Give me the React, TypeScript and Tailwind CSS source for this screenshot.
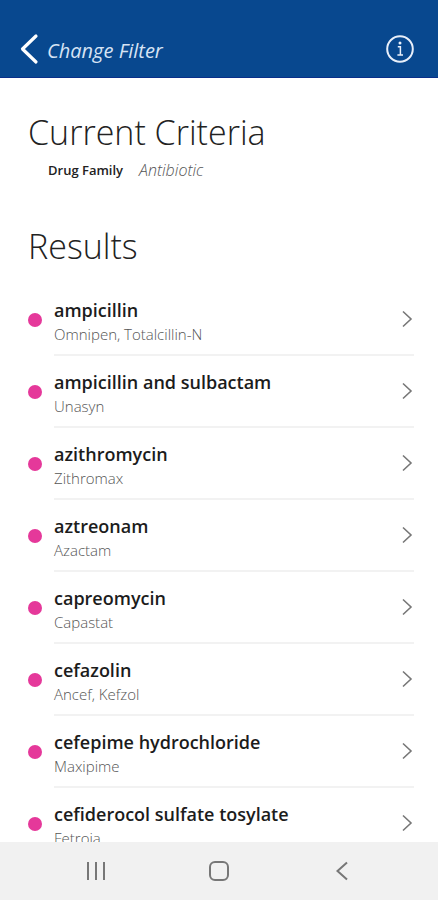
import React from 'react';

interface Drug {
  name: string;
  brands: string;
}

const RESULTS: Drug[] = [
  { name: 'ampicillin', brands: 'Omnipen, Totalcillin-N' },
  { name: 'ampicillin and sulbactam', brands: 'Unasyn' },
  { name: 'azithromycin', brands: 'Zithromax' },
  { name: 'aztreonam', brands: 'Azactam' },
  { name: 'capreomycin', brands: 'Capastat' },
  { name: 'cefazolin', brands: 'Ancef, Kefzol' },
  { name: 'cefepime hydrochloride', brands: 'Maxipime' },
  { name: 'cefiderocol sulfate tosylate', brands: 'Fetroja' },
];

const Header: React.FC = () => (
  <header className="flex h-[78px] shrink-0 items-end justify-between border-b border-[#0a2f8a] bg-[#08488f] px-5 pb-2 text-white">
    <button type="button" className="flex h-10 items-center gap-2">
      <svg width="19" height="32" viewBox="0 0 19 32" fill="none" stroke="currentColor" strokeWidth="3.200" strokeLinecap="round" strokeLinejoin="round" aria-hidden="true">
        <path d="M16 3 2.500 16 16 29" />
      </svg>
      <span className="pt-1 text-xl leading-6 italic text-[#d6e3f4]">Change Filter</span>
    </button>
    <button type="button" aria-label="Information" className="flex h-10 w-9 items-center justify-center">
      <svg width="30" height="30" viewBox="0 0 30 30" fill="none" stroke="#e8effa" aria-hidden="true">
        <circle cx="15" cy="15" r="12.800" strokeWidth="2" />
        <circle cx="15" cy="9" r="1.500" fill="#e8effa" stroke="none" />
        <path d="M12.800 12.800h2.600v8M12.400 21h5.600" strokeWidth="1.500" />
      </svg>
    </button>
  </header>
);

const ResultRow: React.FC<{ drug: Drug }> = ({ drug }) => (
  <li>
    <a href="#" className="flex h-[72px] items-center pl-7">
      <span className="h-[14px] w-[14px] shrink-0 rounded-full bg-[#e5389a]" />
      <span className="ml-3 mr-6 flex h-full flex-1 items-center justify-between border-b-2 border-[#f2f2f2]">
        <span className="flex flex-col pt-1.5">
          <span className="text-lg leading-6 font-semibold text-[#1c1c1c]">{drug.name}</span>
          <span className="text-[15px] leading-6 font-light text-[#555]">{drug.brands}</span>
        </span>
        <svg width="13" height="18" viewBox="0 0 13 18" fill="none" stroke="#777" strokeWidth="1.600" aria-hidden="true">
          <path d="M2 1.500 10 9 2 16.500" />
        </svg>
      </span>
    </a>
  </li>
);

const SystemNav: React.FC = () => (
  <nav className="grid h-[58px] shrink-0 grid-cols-[1fr_54px_1fr] items-center bg-[#f1f1f1] text-[#777]">
    <button type="button" aria-label="Recent apps" className="flex h-full items-center justify-center">
      <svg width="20" height="20" viewBox="0 0 20 20" stroke="currentColor" strokeWidth="2" aria-hidden="true">
        <path d="M2 1v18M10 1v18M18 1v18" />
      </svg>
    </button>
    <button type="button" aria-label="Home" className="flex h-full items-center justify-center">
      <svg width="22" height="22" viewBox="0 0 22 22" fill="none" stroke="currentColor" strokeWidth="2" aria-hidden="true">
        <rect x="2" y="2" width="18" height="18" rx="5" />
      </svg>
    </button>
    <button type="button" aria-label="Back" className="flex h-full items-center justify-center">
      <svg width="14" height="20" viewBox="0 0 14 20" fill="none" stroke="currentColor" strokeWidth="2" aria-hidden="true">
        <path d="M12 1.500 2.500 10 12 18.500" />
      </svg>
    </button>
  </nav>
);

const App: React.FC = () => {
  return (
    <div className="flex h-screen flex-col bg-white font-['Open_Sans','Noto_Sans',sans-serif]">
      <Header />
      <main className="min-h-0 flex-1 overflow-hidden">
        <section className="px-7 pt-8">
          <h1 className="text-[34px] leading-11 font-light text-[#222]">Current Criteria</h1>
          <dl className="flex items-center gap-4 pt-1 pl-5">
            <dt className="text-[13px] leading-6 font-semibold text-[#222]">Drug Family</dt>
            <dd className="text-base leading-6 font-light italic text-[#555]">Antibiotic</dd>
          </dl>
        </section>
        <section className="pt-[42px]">
          <h2 className="px-7 text-[34px] leading-11 font-light text-[#222]">Results</h2>
          <ul className="pt-4">
            {RESULTS.map((drug) => (
              <ResultRow key={drug.name} drug={drug} />
            ))}
          </ul>
        </section>
      </main>
      <SystemNav />
    </div>
  );
};

export default App;
